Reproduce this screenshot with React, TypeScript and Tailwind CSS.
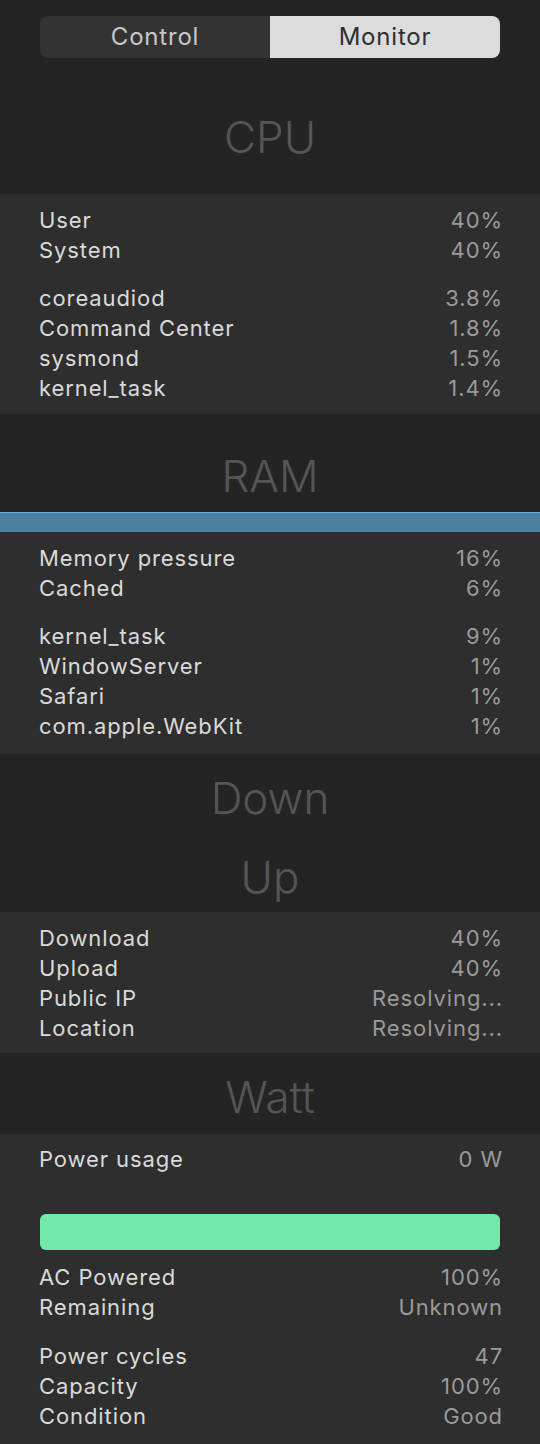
import React from 'react';

type Row = { label: string; value: string };

function Rows({ rows }: { rows: Row[] }) {
  return (
    <div>
      {rows.map((r) => (
        <div key={r.label} className="flex justify-between h-[30px] leading-[30px] text-[22px] tracking-[0.9px]">
          <span className="text-[#dadada]">{r.label}</span>
          <span className="text-[#9a9a9a] -mr-[2px]">{r.value}</span>
        </div>
      ))}
    </div>
  );
}

function Heading({ title, className }: { title: string; className: string }) {
  return (
    <div className={className}>
      <div className="text-center text-[44px] leading-[44px] text-[#555555] font-light">{title}</div>
    </div>
  );
}

export default function App() {
  return (
    <div className="w-[540px] h-[1444px] bg-[#242424] font-['Inter','Noto_Sans',sans-serif] overflow-hidden">
      {/* segmented control */}
      <div className="pt-4 px-10">
        <div className="flex h-[42px] rounded-lg overflow-hidden text-[24px] tracking-[0.8px]">
          <div className="flex-1 flex items-center justify-center bg-[#333333] text-[#c8c8c8]">Control</div>
          <div className="flex-1 flex items-center justify-center bg-[#dcdcdc] text-[#2f2f2f]">Monitor</div>
        </div>
      </div>

      {/* CPU */}
      <Heading title="CPU" className="h-[136px] pt-[57px]" />
      <div className="bg-[#2e2e2e] px-[39px] pt-[11px] pb-[11px] flex flex-col gap-[18px]">
        <Rows rows={[{ label: 'User', value: '40%' }, { label: 'System', value: '40%' }]} />
        <Rows
          rows={[
            { label: 'coreaudiod', value: '3.8%' },
            { label: 'Command Center', value: '1.8%' },
            { label: 'sysmond', value: '1.5%' },
            { label: 'kernel_task', value: '1.4%' },
          ]}
        />
      </div>

      {/* RAM */}
      <Heading title="RAM" className="h-[98px] pt-[40px]" />
      <div className="h-5 bg-[#4a7fa0] border-t border-[#63b2e2]" />
      <div className="bg-[#2e2e2e] px-[39px] pt-[11px] pb-[13px] flex flex-col gap-[18px]">
        <Rows rows={[{ label: 'Memory pressure', value: '16%' }, { label: 'Cached', value: '6%' }]} />
        <Rows
          rows={[
            { label: 'kernel_task', value: '9%' },
            { label: 'WindowServer', value: '1%' },
            { label: 'Safari', value: '1%' },
            { label: 'com.apple.WebKit', value: '1%' },
          ]}
        />
      </div>

      {/* Network */}
      <div className="h-[158px] pt-[22px] flex flex-col gap-[35px]">
        <div className="text-center text-[44px] leading-[44px] text-[#555555] font-light">Down</div>
        <div className="text-center text-[44px] leading-[44px] text-[#555555] font-light">Up</div>
      </div>
      <div className="bg-[#2e2e2e] px-[39px] pt-[11px] pb-[10px]">
        <Rows
          rows={[
            { label: 'Download', value: '40%' },
            { label: 'Upload', value: '40%' },
            { label: 'Public IP', value: 'Resolving...' },
            { label: 'Location', value: 'Resolving...' },
          ]}
        />
      </div>

      {/* Watt */}
      <Heading title="Watt" className="h-[81px] pt-[22px]" />
      <div className="bg-[#2e2e2e] px-[39px] pt-[10px] pb-[13px] h-[310px]">
        <Rows rows={[{ label: 'Power usage', value: '0 W' }]} />
        <div className="mt-10 mx-px h-9 rounded-md bg-[#72e8aa]" />
        <div className="mt-3">
          <Rows rows={[{ label: 'AC Powered', value: '100%' }, { label: 'Remaining', value: 'Unknown' }]} />
        </div>
        <div className="mt-[19px]">
          <Rows
            rows={[
              { label: 'Power cycles', value: '47' },
              { label: 'Capacity', value: '100%' },
              { label: 'Condition', value: 'Good' },
            ]}
          />
        </div>
      </div>
    </div>
  );
}
